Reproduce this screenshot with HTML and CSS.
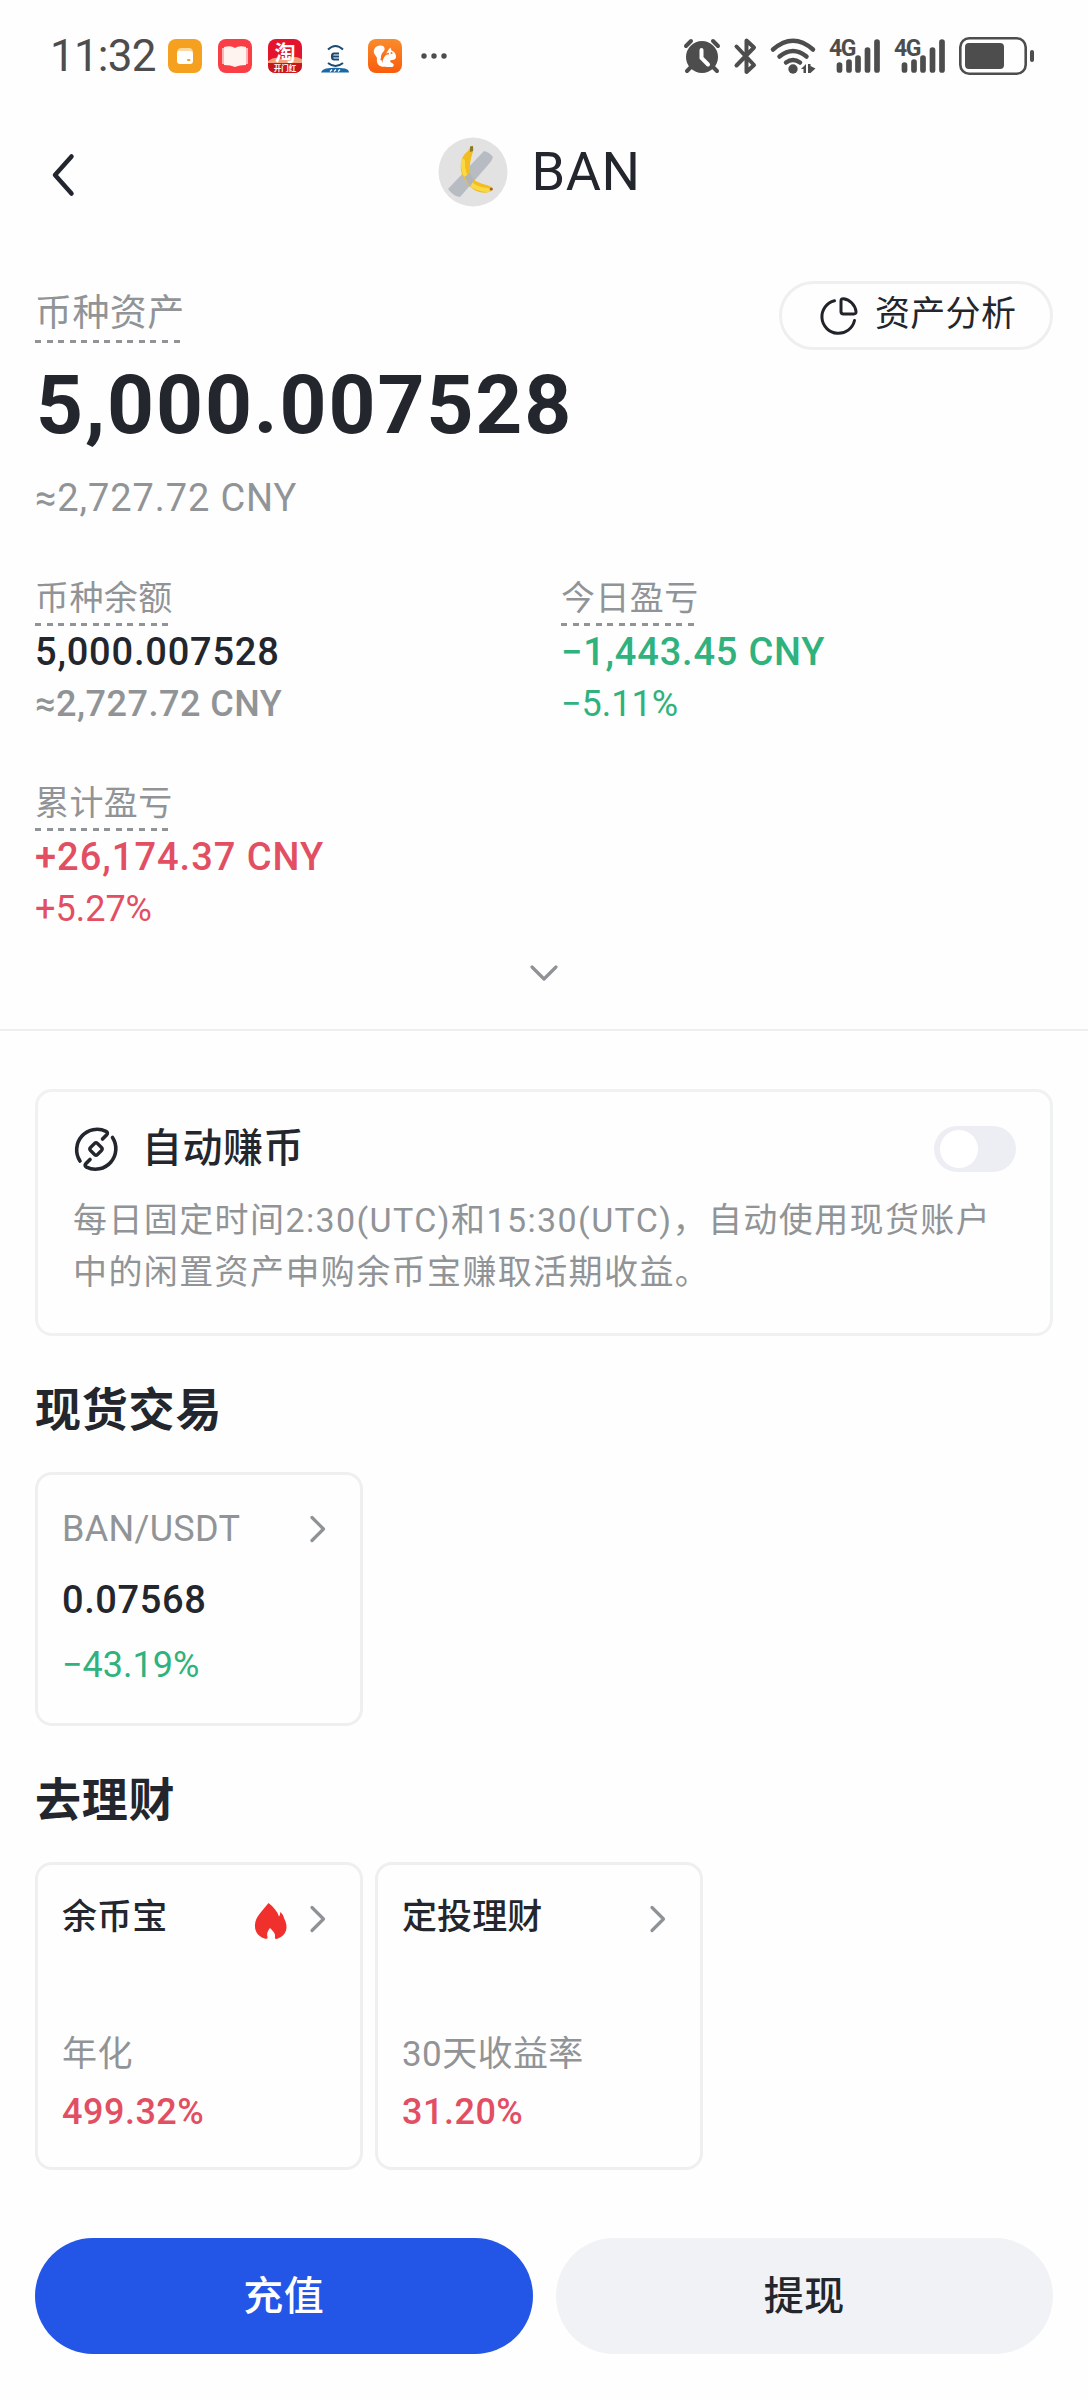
FILE: index.html
```html
<!DOCTYPE html>
<html lang="zh-CN">
<head>
<meta charset="utf-8">
<title>BAN</title>
<link rel="stylesheet" href="styles.css">
</head>
<body>
<header class="status">
  <div class="status-left">
    <span class="clock">11:32</span>
    <svg class="app" viewBox="0 0 34 34"><rect width="34" height="34" rx="8" fill="#f5a11f"/><path d="M9 14q0-5 5-5h7q4 0 4 5z" fill="#fbd9a0"/><rect x="9" y="12" width="16" height="13" rx="3" fill="#fff"/><rect x="19" y="20" width="3.500" height="2" rx="1" fill="#f5a11f"/></svg>
    <svg class="app" viewBox="0 0 34 34"><rect width="34" height="34" rx="8" fill="#f93e46"/><path d="M4 9h4v16H4zM26 9h4v16h-4z" fill="#ffb5b5"/><path d="M6 8q7-2 11 1q4-3 11-1v18q-7 0-11 2q-4-2-11-2z" fill="#fff3f0"/></svg>
    <svg class="app" viewBox="0 0 34 34"><rect width="34" height="34" rx="8" fill="#e3142c"/><path d="M0 22q8-6 15-1q8-6 19-1v4H0z" fill="#f4a07c"/><path d="M0 24h34v2q0 8-8 8H8q-8 0-8-8z" fill="#c8161d"/><text x="17" y="20.500" class="tao">淘</text><text x="17" y="32" class="tao-sub">开门红</text></svg>
    <svg class="app" viewBox="0 0 34 34"><g fill="none" stroke="#1d4a73" stroke-width="2"><path d="M10 10.500q7.500-7 15 0M10 24q7.500 6 15 0"/><path d="M21 14.500h-5q-2 0-2 3t2 3h5M14.500 17.500H21" stroke-width="2.200"/></g><path d="M8 29.500q9-1.500 19 0 4 1 4 4H3q1-3 5-4z" fill="#1a68a5"/><path d="M12 32.500l2-2m2 2l2-2m2 2l2-2" stroke="#fff" stroke-width="1.300"/></svg>
    <svg class="app" viewBox="0 0 34 34"><defs><linearGradient id="uc" x2="0" y2="1"><stop stop-color="#f98c2c"/><stop offset="1" stop-color="#fa5c0b"/></linearGradient></defs><rect width="34" height="34" rx="8" fill="url(#uc)"/><path d="M6 14c-1-5 3-8 7-7.500 4 .5 4.500 4 2.500 6-2.500 2.500-3.500 6-1.500 10l3 5c-5.500 1.500-9-3-8-8 0-2-2-3-3-5.500z" fill="#fff"/><path d="M17 17c2-4 3-6 5.500-8.500l1 3c3 1 4.500 3.500 4.500 6.500 0 2-2 3-3.500 3-3 0-3 1.500-.5 3 2 1 2.500 2.500.5 4h-6.500c-5-1.500-4-7-1-11z" fill="#fff"/><path d="M13 21q2-6 8-6.500" fill="none" stroke="#f9701b" stroke-width="1.600"/><circle cx="23.500" cy="14" r="1" fill="#f87a20"/></svg>
    <svg class="more" viewBox="0 0 26 6"><g fill="#4d4d4d"><circle cx="3" cy="3" r="2.700"/><circle cx="13" cy="3" r="2.700"/><circle cx="23" cy="3" r="2.700"/></g></svg>
  </div>
  <div class="status-right">
    <svg class="alarm" viewBox="0 0 38 36"><g fill="none" stroke="#4d4d4d" stroke-width="4" stroke-linecap="round"><path d="M3 8l5-5M30 3l5 5M8 29l-4 4M30 29l4 4"/></g><circle cx="19" cy="19" r="16" fill="#4d4d4d"/><path d="M18.500 12v8l6.500 6.500" fill="none" stroke="#fff" stroke-width="4" stroke-linecap="round"/></svg>
    <svg class="bt" viewBox="0 0 23 36"><path d="M2.500 8.500L20 27l-7.500 7V22M2.500 27.500L20 9.500 12.500 2.500V14" fill="none" stroke="#4d4d4d" stroke-width="4" stroke-linecap="round" stroke-linejoin="round"/></svg>
    <svg class="wifi" viewBox="0 0 46 36"><g fill="none" stroke="#4d4d4d" stroke-width="4.500" stroke-linecap="round"><path d="M3 11.500Q23-6 43 11.500M9.500 18.500q13.500-11 27 0M16 24.500q7-5 14 0"/></g><circle cx="23" cy="31" r="4.700" fill="#4d4d4d"/><path d="M31 31l5-5v9h-2.500v-4zM38 26h2.500v2l5 2.500-5 4.500H38z" fill="#4d4d4d"/></svg>
    <svg class="signal" viewBox="0 0 52 36"><text x="0" y="18" class="net">4G</text><path d="M10.500 27v5M20 24v8M29 20v12M38.500 12v20M48 4v28" stroke="#4d4d4d" stroke-width="5.700" stroke-linecap="round"/></svg>
    <svg class="signal" viewBox="0 0 52 36"><text x="0" y="18" class="net">4G</text><path d="M10.500 27v5M20 24v8M29 20v12M38.500 12v20M48 4v28" stroke="#4d4d4d" stroke-width="5.700" stroke-linecap="round"/></svg>
    <svg class="battery" viewBox="0 0 76 38"><rect x="1.300" y="1.300" width="65.400" height="35.400" rx="9" fill="none" stroke="#4d4d4d" stroke-width="2.600"/><rect x="6" y="6" width="39" height="26" rx="4" fill="#4d4d4d"/><rect x="71" y="13" width="4" height="12" rx="2" fill="#4d4d4d"/></svg>
  </div>
</header>

<nav class="nav">
  <svg class="back" viewBox="0 0 24 44"><path d="M20.500 3.500L4 22l16.500 18.500" fill="none" stroke="#23262f" stroke-width="4.500" stroke-linecap="round" stroke-linejoin="round"/></svg>
  <div class="coin">
    <svg class="coin-icon" viewBox="0 0 70 70"><circle cx="35" cy="35" r="34.500" fill="#e2e2e3"/><path d="M46 14q5 1 9 6-1 4-5 8L22 60q-7-1-12-8z" fill="#b7bbc2"/><path d="M33 9q3 0 2.500 4c-4 12-5 20-2 27 4 6 13 7 19 9.500q3 2.500 0 5C44 58 35 54 29 46c-8-9-9-25 1-32z" fill="#f3bd20"/><path d="M25 24q-1 12 7 22 7 7 18 7" fill="none" stroke="#fbd944" stroke-width="4" stroke-linecap="round"/><path d="M32 9.500l3-.5v5l-3 1z" fill="#8a7a2c"/><circle cx="53.300" cy="52" r="1.600" fill="#a4611f"/><path d="M26 40l6-4 4 7-4 7z" fill="#b1b5bb"/></svg>
    <span class="coin-name">BAN</span>
  </div>
</nav>

<section class="summary">
  <div class="summary-top">
    <span class="tip tip-lg">币种资产</span>
    <button class="analysis">
      <svg class="pie" viewBox="0 0 38 38"><g fill="none" stroke="#202329" stroke-width="3" stroke-linecap="round" stroke-linejoin="round"><path d="M14.500 3.800A16.500 16.500 0 1 0 34.500 23.500"/><path d="M21 4q0-2.500 2.500-2.300A15 15 0 0 1 36 14.500q.3 2.500-2.200 2.500H23.500q-2.500 0-2.500-2.500z"/></g></svg>
      <span class="analysis-label">资产分析</span>
    </button>
  </div>
  <div class="total">5,000.007528</div>
  <div class="fiat">≈2,727.72 CNY</div>

  <div class="stats">
    <div class="stat">
      <span class="tip">币种余额</span>
      <div class="stat-value">5,000.007528</div>
      <div class="stat-sub muted">≈2,727.72 CNY</div>
    </div>
    <div class="stat down">
      <span class="tip">今日盈亏</span>
      <div class="stat-value">−1,443.45 CNY</div>
      <div class="stat-sub">−5.11%</div>
    </div>
    <div class="stat up">
      <span class="tip">累计盈亏</span>
      <div class="stat-value">+26,174.37 CNY</div>
      <div class="stat-sub">+5.27%</div>
    </div>
  </div>
  <svg class="expand" viewBox="0 0 30 20"><path d="M3 4l12 12L27 4" fill="none" stroke="#8f9296" stroke-width="3.200" stroke-linecap="round" stroke-linejoin="round"/></svg>
</section>

<main class="content">
  <section class="earn">
    <div class="earn-head">
      <svg class="earn-icon" viewBox="0 0 46 46"><g fill="none" stroke="#23262c" stroke-width="3.600" stroke-linecap="round" stroke-linejoin="round"><path d="M7 35A20.500 20.500 0 0 1 33 5.300q2.500 1.500.5 3.600L29.500 13"/><path d="M39.500 11.500A20.500 20.500 0 0 1 13.500 41.200q-2.500-1.500-.5-3.600L17 33.500"/><path d="M21.500 17.500q1.500-1.500 3 0l4 4q1.500 1.500 0 3l-4 4q-1.500 1.500-3 0l-4-4q-1.500-1.500 0-3z" stroke-width="3.200"/></g></svg>
      <span class="earn-title">自动赚币</span>
      <span class="toggle"></span>
    </div>
    <p class="earn-text">每日固定时间2:30(UTC)和15:30(UTC)，自动使用现货账户<br>中的闲置资产申购余币宝赚取活期收益。</p>
  </section>

  <h2 class="heading">现货交易</h2>
  <div class="cards">
    <article class="card card-spot">
      <div class="card-head"><span class="pair">BAN/USDT</span><svg class="chev" viewBox="0 0 20 30"><path d="M4 3.500L15.500 15 4 26.500" fill="none" stroke="#8f9296" stroke-width="3.200" stroke-linecap="round" stroke-linejoin="round"/></svg></div>
      <div class="price">0.07568</div>
      <div class="change down">−43.19%</div>
    </article>
  </div>

  <h2 class="heading">去理财</h2>
  <div class="cards">
    <article class="card card-fin">
      <div class="card-head"><span class="card-title">余币宝</span><svg class="flame" viewBox="0 0 33 38"><path d="M14.500 1c5 4 9 8.500 10.500 13.500 1-1.500 1.200-2.500 1.200-4.500 2 1.500 3.500 4 3.800 6 5 9.500 2.500 17-6 20.500-2 .8-3.500.5-3-1.500.5-4-1.500-5-5-9-2 2.500-3.500 5-2.500 9 .3 1.800-1 2.200-3 1.500C3 34 .5 28 1 22.500c.5-8 7-13 13.500-21.500z" fill="#f0302d"/></svg><svg class="chev" viewBox="0 0 20 30"><path d="M4 3.500L15.500 15 4 26.500" fill="none" stroke="#8f9296" stroke-width="3.200" stroke-linecap="round" stroke-linejoin="round"/></svg></div>
      <div class="rate-label">年化</div>
      <div class="rate up">499.32%</div>
    </article>
    <article class="card card-fin">
      <div class="card-head"><span class="card-title">定投理财</span><svg class="chev" viewBox="0 0 20 30"><path d="M4 3.500L15.500 15 4 26.500" fill="none" stroke="#8f9296" stroke-width="3.200" stroke-linecap="round" stroke-linejoin="round"/></svg></div>
      <div class="rate-label">30天收益率</div>
      <div class="rate up">31.20%</div>
    </article>
  </div>
</main>

<footer class="actions">
  <button class="btn btn-primary">充值</button>
  <button class="btn btn-plain">提现</button>
</footer>
</body>
</html>
```
FILE: styles.css
```css
* { box-sizing: border-box; }

body {
  margin: 0;
  width: 1088px;
  height: 2400px;
  display: flex;
  flex-direction: column;
  background: #fefefe;
  color: #23262c;
  font-family: Roboto, "Noto Sans CJK SC", sans-serif;
  font-size: 36px;
}

svg { display: block; flex: none; overflow: visible; }
button { margin: 0; padding: 0; border: 0; font: inherit; color: inherit; }
.muted { color: #919497; }
.up { color: #e24f63; }
.down { color: #2fb27d; }

/* status bar */
.status {
  height: 112px;
  padding: 0 53px 0 50px;
  display: flex;
  align-items: center;
  justify-content: space-between;
}
.status-left, .status-right { display: flex; align-items: center; }
.clock {
  width: 118px;
  font-size: 44px;
  line-height: 60px;
  letter-spacing: -0.8px;
  color: #4d4d4d;
}
.app { width: 34px; height: 34px; margin-right: 16px; }
.tao, .tao-sub { fill: #fff; text-anchor: middle; font-weight: 700; }
.tao { font-size: 21px; }
.tao-sub { font-size: 7.500px; }
.more { width: 26px; height: 6px; margin-left: 3px; }
.alarm { width: 38px; height: 36px; }
.bt { width: 23px; height: 36px; margin-left: 13px; }
.wifi { width: 46px; height: 36px; margin-left: 13px; }
.signal { width: 52px; height: 36px; margin-left: 13px; }
.net { font-size: 23px; font-weight: 700; fill: #4d4d4d; letter-spacing: -1.5px; }
.battery { width: 76px; height: 38px; margin-left: 13px; }

/* title bar */
.nav {
  height: 119px;
  padding: 0 61px 0 51px;
  display: grid;
  grid-template-columns: 1fr auto 1fr;
  align-items: center;
}
.back { width: 24px; height: 44px; margin-top: 6px; }
.coin { display: flex; align-items: center; gap: 24px; }
.coin-icon { width: 70px; height: 70px; }
.coin-name { font-size: 54px; line-height: 70px; letter-spacing: 0.5px; }

/* balance summary */
.summary {
  padding: 50px 35px 46px;
  border-bottom: 2px solid #eeeeee;
}
.summary-top { display: flex; justify-content: space-between; height: 69px; }
.tip {
  display: inline-block;
  height: 53px;
  line-height: 50px;
  font-size: 34px;
  letter-spacing: 0.4px;
  color: #919497;
  background: repeating-linear-gradient(90deg, #919497 0 6px, transparent 6px 11.550px) left bottom / 134px 3px no-repeat;
}
.tip-lg {
  height: 62px;
  line-height: 66px;
  font-size: 37px;
  background-size: 145px 3px;
}
.analysis {
  width: 274px;
  height: 69px;
  padding-left: 38px;
  border: 3px solid #eeeff0;
  border-radius: 35px;
  background: none;
  display: flex;
  align-items: center;
  gap: 17px;
}
.pie { width: 38px; height: 38px; }
.analysis-label { margin-top: -1px; font-size: 35px; line-height: 50px; letter-spacing: 0.3px; }
.total {
  margin-top: 15px;
  padding-left: 1px;
  font-size: 82px;
  line-height: 80px;
  font-weight: 700;
  letter-spacing: 1.9px;
}
.fiat { margin-top: 33px; font-size: 38px; line-height: 40px; letter-spacing: 0.9px; color: #919497; }
.stats {
  margin-top: 55px;
  display: grid;
  grid-template-columns: 526px 1fr;
  row-gap: 54px;
}
.stat { display: flex; flex-direction: column; align-items: flex-start; }
.stat-value { margin-top: 6px; font-size: 38px; line-height: 40px; font-weight: 500; letter-spacing: 0.8px; }
.stat-sub { margin-top: 12px; font-size: 36px; line-height: 40px; }
.stat-sub.muted { font-weight: 500; letter-spacing: 0.5px; }
.stat.up .stat-value { letter-spacing: 1px; }
.expand { width: 30px; height: 20px; margin: 34px auto 0; }

/* auto earn */
.content { padding: 58px 35px 0; }
.earn {
  height: 247px;
  padding: 33px 34px 0 35px;
  border: 3px solid #f0f1f1;
  border-radius: 17px;
}
.earn-head { display: flex; align-items: center; height: 48px; }
.earn-icon { width: 46px; height: 46px; }
.earn-title { margin-left: 23px; font-size: 40px; line-height: 48px; font-weight: 500; letter-spacing: 0.5px; }
.toggle {
  width: 82px;
  height: 46px;
  margin-left: auto;
  border-radius: 23px;
  background: radial-gradient(circle at 25px 23px, #fff 18.500px, #ededf4 19.500px);
}
.earn-text {
  margin: 21px 0 0;
  font-size: 34px;
  line-height: 52px;
  letter-spacing: 1.4px;
  color: #919497;
  white-space: nowrap;
}

/* sections */
.heading { margin: 44px 0 0; font-size: 46px; line-height: 60px; font-weight: 700; letter-spacing: 0.8px; }
.cards { display: flex; gap: 12px; margin-top: 32px; }
.card {
  width: 328px;
  padding: 0 32px 0 24px;
  border: 3px solid #efefef;
  border-radius: 17px;
}
.card-spot { height: 254px; }
.card-fin { height: 308px; }
.card-head {
  margin-top: 33px;
  height: 42px;
  display: flex;
  align-items: center;
  justify-content: space-between;
  font-size: 35px;
  line-height: 42px;
}
.card-title { margin-top: -2px; font-weight: 500; letter-spacing: 0.1px; }
.pair { font-size: 36px; letter-spacing: 0.3px; color: #919497; }
.chev { width: 20px; height: 30px; }
.flame { width: 33px; height: 38px; margin: 3px 21px 0 auto; }
.price { margin-top: 29px; font-size: 38px; line-height: 42px; font-weight: 500; letter-spacing: 0.6px; }
.change { margin-top: 23px; font-size: 36px; line-height: 42px; }
.rate-label { margin-top: 94px; font-size: 35px; line-height: 42px; letter-spacing: 0.4px; color: #919497; }
.rate { margin-top: 15px; font-size: 36px; line-height: 42px; font-weight: 500; letter-spacing: 0.5px; }

/* bottom actions */
.actions { display: flex; gap: 23px; padding: 68px 35px 0; }
.btn { flex: 1; height: 116px; padding-bottom: 6px; border-radius: 58px; font-size: 40px; font-weight: 500; letter-spacing: 0.5px; }
.btn-primary { background: #2355e6; color: #fff; }
.btn-plain { background: #f1f2f6; }
```
